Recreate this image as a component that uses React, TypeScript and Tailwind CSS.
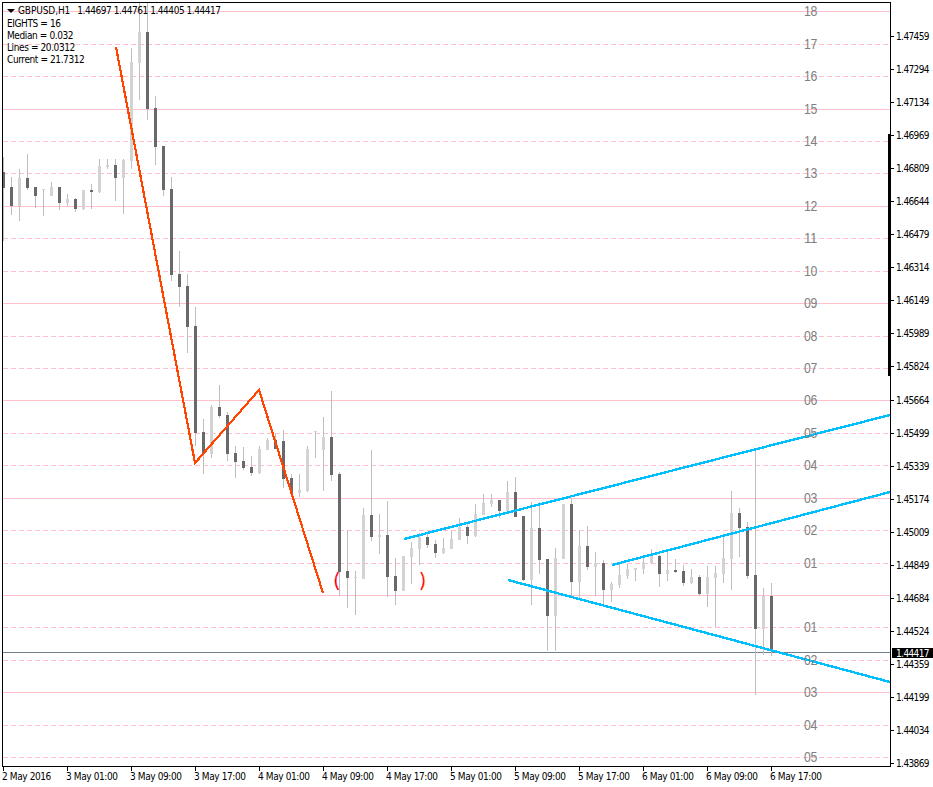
// MT4 chart: GBPUSD H1 with eighths lines
const FONT = "font-['DejaVu_Sans_Condensed','DejaVu_Sans',sans-serif]"

// [high, bodyTop, bodyBottom, low, dark]
type Candle = [number, number, number, number, number]

const candles: Candle[] = [
  [157, 172, 188, 241, 1], [177, 187, 206, 215, 1], [169, 178, 206, 221, 0], [154, 178, 188, 190, 1],
  [187, 187, 196, 208, 1], [189, 189, 190, 216, 0], [182, 187, 196, 196, 0], [187, 187, 203, 210, 1],
  [194, 199, 203, 206, 0], [198, 199, 209, 212, 1], [190, 190, 209, 210, 0], [184, 190, 192, 209, 1],
  [159, 166, 192, 193, 0], [159, 165, 167, 169, 0], [159, 165, 178, 201, 1], [159, 160, 178, 214, 0],
  [48, 62, 161, 169, 0], [3, 32, 63, 100, 0], [3, 32, 109, 120, 1], [96, 108, 147, 165, 1],
  [146, 146, 190, 196, 1], [177, 189, 275, 281, 1], [251, 274, 287, 307, 1], [274, 286, 327, 353, 1],
  [307, 326, 433, 446, 1], [419, 432, 453, 474, 1], [405, 407, 454, 458, 0], [385, 407, 416, 418, 1],
  [412, 415, 454, 461, 1], [446, 453, 462, 478, 1], [447, 461, 468, 470, 1], [456, 467, 473, 476, 1],
  [446, 449, 473, 474, 0], [438, 440, 450, 450, 0], [433, 440, 449, 449, 1], [430, 441, 479, 488, 1],
  [474, 478, 493, 497, 1], [474, 490, 493, 497, 0], [446, 449, 491, 492, 0], [431, 431, 432, 458, 0],
  [417, 437, 450, 491, 0], [391, 437, 475, 481, 1], [472, 474, 572, 596, 1], [530, 571, 578, 608, 1],
  [571, 577, 578, 615, 0], [508, 515, 579, 579, 0], [450, 515, 537, 541, 1], [514, 535, 537, 554, 0],
  [501, 535, 577, 597, 1], [558, 576, 591, 605, 1], [556, 556, 591, 591, 0], [542, 548, 557, 584, 0],
  [533, 537, 549, 565, 0], [533, 537, 545, 548, 1], [540, 544, 553, 558, 1], [538, 548, 553, 554, 0],
  [531, 539, 549, 549, 0], [518, 527, 540, 540, 0], [522, 527, 536, 544, 1], [504, 514, 536, 537, 0],
  [494, 503, 515, 515, 0], [494, 500, 504, 507, 0], [500, 500, 511, 518, 1], [481, 492, 511, 511, 0],
  [477, 492, 517, 517, 1], [516, 516, 580, 581, 1], [502, 528, 580, 605, 0], [502, 528, 560, 574, 1],
  [559, 559, 616, 651, 1], [548, 558, 616, 651, 0], [504, 504, 559, 559, 0], [498, 504, 582, 596, 1],
  [530, 546, 582, 598, 0], [526, 546, 567, 570, 1], [552, 563, 567, 596, 0], [560, 563, 590, 605, 1],
  [582, 584, 590, 602, 0], [563, 575, 585, 588, 0], [564, 569, 576, 579, 0], [568, 568, 570, 581, 0],
  [556, 562, 569, 574, 0], [549, 556, 563, 564, 0], [555, 556, 574, 587, 1], [549, 570, 574, 581, 0],
  [559, 570, 572, 573, 1], [565, 571, 583, 586, 1], [569, 577, 583, 584, 0], [575, 577, 594, 596, 1],
  [566, 577, 594, 607, 0], [566, 573, 578, 627, 0], [537, 558, 574, 583, 0], [491, 513, 559, 590, 0],
  [508, 513, 528, 557, 1], [522, 527, 576, 579, 1], [450, 575, 629, 695, 1], [588, 596, 629, 655, 0],
  [583, 596, 651, 656, 1],
]

const eighths = ['18', '17', '16', '15', '14', '13', '12', '11', '10', '09', '08', '07', '06', '05', '04', '03', '02', '01', '', '01', '02', '03', '04', '05']

const prices = ['1.47459', '1.47294', '1.47134', '1.46969', '1.46809', '1.46644', '1.46479', '1.46314', '1.46149', '1.45989', '1.45824', '1.45664', '1.45499', '1.45339', '1.45174', '1.45009', '1.44849', '1.44684', '1.44524', '1.44359', '1.44199', '1.44034', '1.43869']

const times = ['2 May 2016', '3 May 01:00', '3 May 09:00', '3 May 17:00', '4 May 01:00', '4 May 09:00', '4 May 17:00', '5 May 01:00', '5 May 09:00', '5 May 17:00', '6 May 01:00', '6 May 09:00', '6 May 17:00']

const legend = ['EIGHTS = 16', 'Median = 0.032', 'Lines = 20.0312', 'Current = 21.7312']

// svg origin sits at page (3, 3)
const O = 3
const lineY = (i: number) => Math.round(11.3 + i * 32.43) - O

function Chart() {
  return (
    <svg width={887} height={763} className="block" shapeRendering="crispEdges">
      {/* eighths lines */}
      {eighths.map((_, i) => (
        <line
          key={i}
          x1={0}
          x2={887}
          y1={lineY(i) + 0.5}
          y2={lineY(i) + 0.5}
          stroke="#ffc0cb"
          strokeDasharray={i % 3 === 0 ? undefined : '5 3'}
        />
      ))}
      <line x1={0} x2={887} y1={649.5} y2={649.5} stroke="#708090" />

      {/* candles */}
      {candles.map(([high, top, bottom, low, dark], i) => {
        const x = 3 + i * 8 - O
        return (
          <g key={i}>
            <rect x={x} y={high - O} width={1} height={low - high} fill="#bebebe" />
            <rect
              x={x - 1}
              y={top - O}
              width={3}
              height={bottom - top}
              fill={dark ? '#696969' : '#d3d3d3'}
            />
          </g>
        )
      })}

      {/* wave lines */}
      <polyline points="113,44 192,460 256,387 320,590" fill="none" stroke="#ff4500" strokeWidth={2.2} />
      <line x1={401} y1={536} x2={887} y2={412} stroke="#00bfff" strokeWidth={2.4} />
      <line x1={609} y1={562} x2={887} y2={489} stroke="#00bfff" strokeWidth={2.4} />
      <line x1={505} y1={577} x2={887} y2={679} stroke="#00bfff" strokeWidth={2.4} />

      {/* brackets around the low */}
      <g fill="none" shapeRendering="auto">
        <path d="M334.6 569 Q328.6 578 334.6 587" stroke="#ffa000" strokeWidth={0.6} />
        <path d="M335.2 569 Q329.6 578 335.2 587" stroke="#ff0000" strokeWidth={1.3} />
        <path d="M335.8 569 Q330.6 578 335.8 587" stroke="#ff00a0" strokeWidth={0.6} />
        <path d="M417.6 569 Q422.6 578 417.6 587" stroke="#ff00a0" strokeWidth={0.6} />
        <path d="M418.2 569 Q423.6 578 418.2 587" stroke="#ff0000" strokeWidth={1.3} />
        <path d="M418.8 569 Q424.6 578 418.8 587" stroke="#ffa000" strokeWidth={0.6} />
      </g>

      {/* eighths numbers */}
      {eighths.map((n, i) => (
        <text
          key={i}
          x={801}
          y={lineY(i) + 5}
          fill="#808080"
          fontSize={15}
          textLength={13}
          lengthAdjust="spacingAndGlyphs"
          fontFamily="'Liberation Sans', sans-serif"
        >
          {n}
        </text>
      ))}
    </svg>
  )
}

export default function App() {
  return (
    <div className={`w-[933px] h-[787px] bg-white overflow-hidden pt-[2px] pl-[2px] text-black text-[10px] tracking-[-0.4px] ${FONT}`}>
      <div className="flex h-[765px]">
        {/* chart frame */}
        <div className="relative border border-black w-[889px] h-[765px]">
          <Chart />
          <div className="absolute left-[4px] top-[1px] leading-[12px]">
            <div className="flex items-center pl-[1px] h-[14px] -ml-[1px]">
              <span className="w-0 h-0 mr-[3px] border-x-[4px] border-x-transparent border-t-[4px] border-t-black" />
              <span className="tracking-[-0.1px] mr-[7px]">GBPUSD,H1</span>
              <span className="whitespace-pre tracking-[-0.45px]">1.44697 1.44761 1.44405 1.44417</span>
            </div>
            {legend.map((l) => (
              <div key={l} className="h-[12px]">{l}</div>
            ))}
          </div>
          {/* volatility marker on the scale */}
          <div className="absolute left-[885px] top-[131px] w-[3px] h-[242px] bg-black" />
        </div>

        {/* price scale */}
        <div className="relative flex-1 pt-[18px] tracking-[-0.6px]">
          {prices.map((p) => (
            <div key={p} className="flex items-center h-[33.05px] gap-[2px]">
              <span className="w-[3px] h-[1px] bg-black" />
              <span>{p}</span>
            </div>
          ))}
          <div className="absolute left-[1px] top-[646px] w-[41px] h-[10px] bg-black text-white flex items-center pl-[4px]">
            1.44417
          </div>
        </div>
      </div>

      {/* time scale */}
      <div className="flex leading-[12px]">
        {times.map((t) => (
          <div key={t} className="w-[64px] shrink-0">
            <div className="ml-[1px] w-[1px] h-[4px] bg-black" />
            <div className="whitespace-nowrap">{t}</div>
          </div>
        ))}
      </div>
    </div>
  )
}
